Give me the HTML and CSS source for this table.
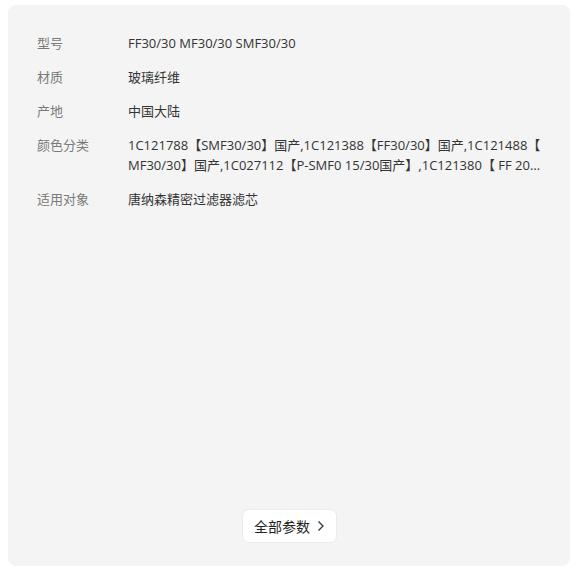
FILE: index.html
```html
<!DOCTYPE html>
<html lang="zh-CN">
<head>
    <meta charset="UTF-8">
    <meta name="viewport" content="width=device-width, initial-scale=1.0">
    <title>商品参数</title>
    <link rel="stylesheet" href="styles.css">
</head>
<body>

<div class="card">
    <div class="params">
        <div class="param-row">
            <div class="param-label">型号</div>
            <div class="param-value">FF30/30 MF30/30 SMF30/30</div>
        </div>
        <div class="param-row">
            <div class="param-label">材质</div>
            <div class="param-value">玻璃纤维</div>
        </div>
        <div class="param-row">
            <div class="param-label">产地</div>
            <div class="param-value">中国大陆</div>
        </div>
        <div class="param-row">
            <div class="param-label">颜色分类</div>
            <div class="param-value clamp">1C121788【SMF30/30】国产,1C121388【FF30/30】国产,1C121488【MF30/30】国产,1C027112【P-SMF0 15/30国产】,1C121380【 FF 20/30】国产,1C121480【MF20/30】国产</div>
        </div>
        <div class="param-row">
            <div class="param-label">适用对象</div>
            <div class="param-value">唐纳森精密过滤器滤芯</div>
        </div>
    </div>

    <div class="more">
        <button class="more-btn">全部参数
            <svg width="8" height="12" viewBox="0 0 8 12"><path d="M1.5 1.5 L6 6 L1.5 10.5" fill="none" stroke="#333" stroke-width="1.3"/></svg>
        </button>
    </div>
</div>

</body>
</html>
```

FILE: styles.css
```css
body {
    font-family: "Open Sans", "Noto Sans CJK SC", sans-serif;
    background-color: #fff;
    margin: 0;
    padding: 5px 6px 0 8px;
}
.card {
    height: 561px;
    box-sizing: border-box;
    padding: 28px 28px 23px 29px;
    background-color: #f4f4f4;
    border-radius: 8px;
    display: flex;
    flex-direction: column;
}
.params {
    display: flex;
    flex-direction: column;
    gap: 14px;
}
.param-row {
    display: flex;
    font-size: 13px;
    line-height: 20px;
}
.param-label {
    width: 91px;
    flex-shrink: 0;
    color: #7a7a7a;
}
.param-value {
    flex: 1;
    color: #333;
}
.clamp {
    display: -webkit-box;
    -webkit-box-orient: vertical;
    -webkit-line-clamp: 2;
    overflow: hidden;
    line-break: anywhere;
}
.more {
    margin-top: auto;
    display: flex;
    justify-content: center;
}
.more-btn {
    width: 95px;
    height: 34px;
    display: flex;
    align-items: center;
    justify-content: center;
    gap: 7px;
    background: #fff;
    border: 1px solid #ebebeb;
    border-radius: 7px;
    font-family: inherit;
    font-size: 14px;
    color: #222;
    padding: 0;
}
```
